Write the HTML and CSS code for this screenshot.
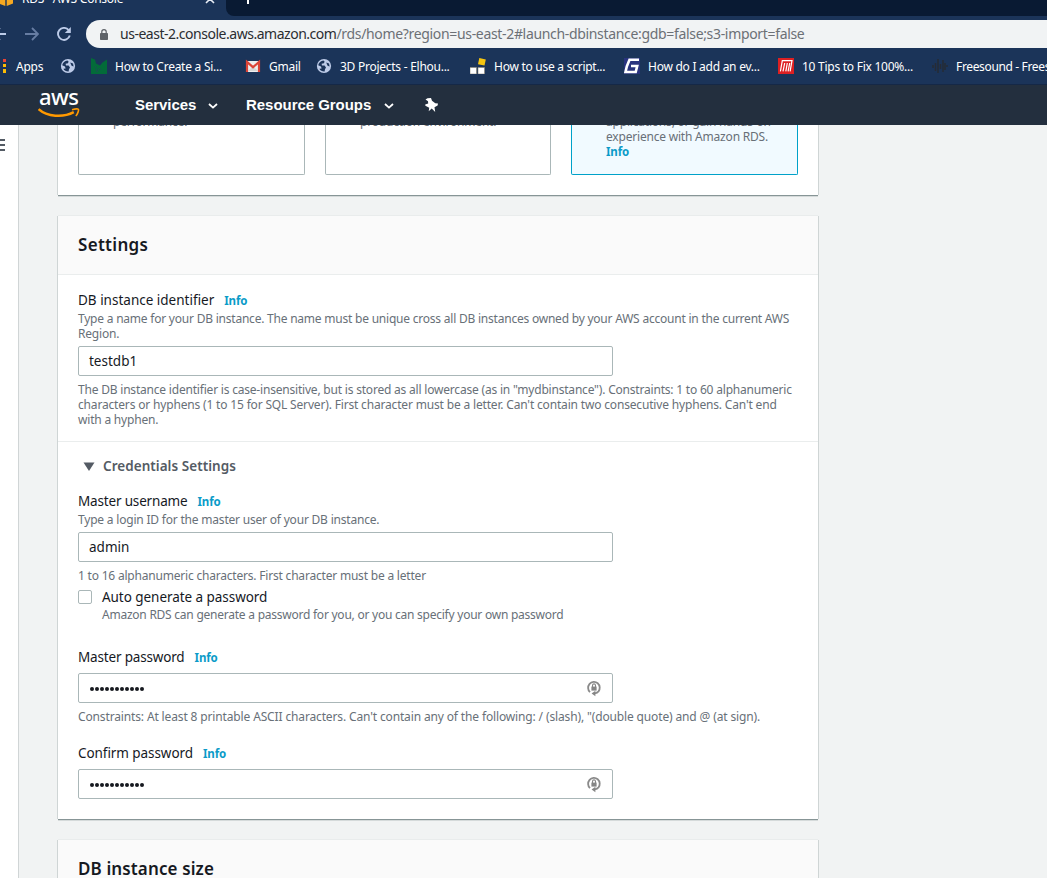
FILE: index.html
```
<!DOCTYPE html>
<html lang="en">
<head>
<meta charset="utf-8">
<title>RDS · AWS Console</title>
<link rel="stylesheet" href="styles.css">
</head>
<body>
<svg class="defs" width="0" height="0">
  <symbol id="globe" viewBox="0 0 16 16">
    <circle cx="8" cy="8" r="7.1" fill="#bdcbe8"/>
    <path d="M2.2 7.2C2.6 4.6 5 2.6 7.4 2.4L8.6 3.6 8 5.2 5.6 5.8 6 7.4 8.6 7.6 10 9.4 9 11.2 8.6 13.6C6.6 13.8 4.2 12.6 3.4 10.8L5.6 10.6 5 8.6Z" fill="#1b3459"/>
    <path d="M10.2 4.4L13 5.4 13.6 8.4 11.6 7.8Z" fill="#1b3459"/>
  </symbol>
  <symbol id="chev" viewBox="0 0 10 6"><path d="M1 1l4 3.6L9 1" fill="none" stroke="#fff" stroke-width="1.8"/></symbol>
  <symbol id="key" viewBox="0 0 16 18">
    <path d="M4 13.200A5.800 6 0 1 1 12.400 12.600Q11.400 14 8.800 14.300" fill="none" stroke="#8a8a8a" stroke-width="1.800"/>
    <path d="M9.400 11.800v5.400L5.600 14.600z" fill="#858585"/>
    <rect x="5.400" y="7.600" width="5.200" height="4" fill="#858585"/>
    <path d="M6.500 8V6.400a1.500 1.500 0 0 1 3 0V8" fill="none" stroke="#858585" stroke-width="1.100"/>
  </symbol>
</svg>

<div class="tabstrip">
  <div class="tab">
    <svg class="favicon" width="14" height="14" viewBox="0 0 14 14"><path d="M0 0h6.3v14L0 11.5zM7.7 0H14v11.5L7.7 14z" fill="#f6a821"/></svg>
    <span class="tab-title">RDS · AWS Console</span>
    <svg class="tab-close" width="10" height="10" viewBox="0 0 10 10"><path d="M1 1l8 8M9 1L1 9" stroke="#e8edf5" stroke-width="1.6"/></svg>
  </div>
  <div class="tab-rest"><i class="plus"></i></div>
</div>

<div class="toolbar">
  <svg class="back" width="14" height="14" viewBox="0 0 14 14"><path d="M13 7H1M7 1L1 7l6 6" fill="none" stroke="#bccbe8" stroke-width="1.8"/></svg>
  <svg class="fwd" width="14" height="14" viewBox="0 0 14 14"><path d="M0 7h13M7 1l6 6-6 6" fill="none" stroke="#677da3" stroke-width="1.8"/></svg>
  <svg class="reload" width="14" height="14" viewBox="0 0 14 14"><path d="M11.6 3A6 6 0 1 0 12.8 8.6" fill="none" stroke="#bccbe8" stroke-width="1.9"/><path d="M13.8 0v6H7.8z" fill="#bccbe8"/></svg>
  <div class="omnibox">
    <svg width="8" height="11" viewBox="0 0 8 11"><rect y="4" width="8" height="7" rx=".8" fill="#5f6368"/><path d="M1.8 4.5V2.8a2.2 2.2 0 0 1 4.4 0v1.7" fill="none" stroke="#5f6368" stroke-width="1.2"/></svg>
    <span class="url"><b>us-east-2.console.aws.amazon.com</b>/rds/home?region=us-east-2#launch-dbinstance:gdb=false;s3-import=false</span>
  </div>
</div>

<div class="bookmarks">
  <a class="bm apps"><svg width="16" height="16" viewBox="0 0 16 16"><path d="M4 1h4v4H4z" fill="#ea4335"/><path d="M11 1h3v3h-3z" fill="#ea4335"/><path d="M4 6h4v4H4z" fill="#4285f4"/><path d="M11 6h3v3h-3zM4 11h4v4H4zM11 11h3v4h-3z" fill="#fbbc05"/></svg><span>Apps</span></a>
  <a class="bm"><svg width="16" height="16"><use href="#globe"/></svg></a>
  <a class="bm"><svg width="16" height="16" viewBox="0 0 16 16"><path d="M0 0L4 1.5 5 5.5 9 7.5 11.5 4.5 16 1.5V16H0z" fill="#036b39"/><path d="M4.5 8l1.5 6 2.5-4 1.5 2" fill="none" stroke="#1b4f52" stroke-width=".9"/></svg><span>How to Create a Si...</span></a>
  <a class="bm gmail"><svg width="16" height="16" viewBox="0 0 16 16"><path d="M1 3h14v11H1z" fill="#eee"/><path d="M3 13l5-5 5 5z" fill="#d7d7d7"/><path d="M2 14V4L8 9.200 14 4V14" fill="none" stroke="#dc4437" stroke-width="2.2"/></svg><span>Gmail</span></a>
  <a class="bm"><svg width="16" height="16"><use href="#globe"/></svg><span>3D Projects - Elhou...</span></a>
  <a class="bm script"><svg width="16" height="16" viewBox="0 0 16 16"><path d="M9.300 0l6.500 1.400-1.300 6.200L8 6.200z" fill="#f6c510"/><path d="M0 9.500h6.500V16H0zM8 9.500h6.500V16H8z" fill="#fff" stroke="#8d8572" stroke-width=".6"/></svg><span>How to use a script...</span></a>
  <a class="bm"><svg width="16" height="16" viewBox="0 0 16 16"><rect width="16" height="16" fill="#29337e"/><path d="M15 1.800H5.500L2.800 8.500 1.500 14h10.200l1.500-6H7" fill="none" stroke="#fff" stroke-width="2.6"/></svg><span>How do I add an ev...</span></a>
  <a class="bm tips"><svg width="16" height="16" viewBox="0 0 16 16"><rect width="16" height="16" fill="#dd2022"/><path d="M2.400 13.400L4.300 2.600h9.700l-1.900 10.800M5 13.400L6.700 5M7.800 13.400L9.300 5M10.100 13.400L11.700 5" fill="none" stroke="#fff" stroke-width="1.2"/></svg><span>10 Tips to Fix 100%...</span></a>
  <a class="bm free"><svg width="16" height="16" viewBox="0 0 16 16"><path d="M1 7v3M3.500 5v8M6 1v14M8.500 6v5M11 2v12M13 5v7M15 7v2" stroke="#262b35" stroke-width="1.500"/></svg><span>Freesound - Freesound</span></a>
</div>

<nav class="awsnav">
  <div class="aws-logo">
    <span>aws</span>
    <svg width="42" height="14" viewBox="0 0 42 14"><path d="M.6 1.200C9 8.800 25 10 35.800 4.200" fill="none" stroke="#f90" stroke-width="2.500"/><path d="M34 1.800c3-1 6-1 6.400-.400.500 1-.8 4.800-2.600 6.600" fill="none" stroke="#f90" stroke-width="1.600"/></svg>
  </div>
  <span class="nav-item services">Services</span><svg class="c1" width="10" height="6"><use href="#chev"/></svg>
  <span class="nav-item groups">Resource Groups</span><svg class="c2" width="10" height="6"><use href="#chev"/></svg>
  <svg class="pin" width="13" height="14" viewBox="0 0 13 14"><path d="M2.500.3L6 0l1 2.800 3.300 2.400L13 5.600 12.600 7.600 9.500 9.300 10.200 14 6.700 10.600 3.700 13.200 4.200 9.800.4 7.800.2 6.500 3.200 5.600 3 3.200.5 1.600z" fill="#fff"/></svg>
</nav>

<div class="page">
  <aside class="side"><svg width="5" height="12" viewBox="0 0 5 12"><path d="M0 1h5M0 6h5M0 11h5" stroke="#545b64" stroke-width="1.800"/></svg></aside>
  <main class="main">
    <section class="card templates">
      <div class="tile"><p class="help h-perf">performance.</p></div>
      <div class="tile"><p class="help h-prod">production environment.</p></div>
      <div class="tile selected"><p class="help h-apps">applications, or gain hands-on</p><p class="help h-exp">experience with Amazon RDS.</p><p class="info">Info</p></div>
    </section>

    <section class="card settings">
      <header class="card-head"><h2>Settings</h2></header>
      <div class="group">
        <div class="label"><span class="l-ident">DB instance identifier</span><a class="info">Info</a></div>
        <p class="help h-1">Type a name for your DB instance. The name must be unique cross all DB instances owned by your AWS account in the current AWS</p>
        <p class="help">Region.</p>
        <div class="input">testdb1</div>
        <p class="help h-2 after">The DB instance identifier is case-insensitive, but is stored as all lowercase (as in "mydbinstance"). Constraints: 1 to 60 alphanumeric</p>
        <p class="help h-3">characters or hyphens (1 to 15 for SQL Server). First character must be a letter. Can't contain two consecutive hyphens. Can't end</p>
        <p class="help h-4">with a hyphen.</p>
      </div>
      <div class="group credentials">
        <div class="expander"><svg width="12" height="9" viewBox="0 0 12 9"><path d="M.5.500h11L6 9z" fill="#545b64"/></svg><h3>Credentials Settings</h3></div>
        <div class="label l-user-row"><span class="l-user">Master username</span><a class="info">Info</a></div>
        <p class="help h-5">Type a login ID for the master user of your DB instance.</p>
        <div class="input">admin</div>
        <p class="help h-6 after">1 to 16 alphanumeric characters. First character must be a letter</p>
        <div class="check-row"><i class="checkbox"></i><span class="l-auto">Auto generate a password</span></div>
        <p class="help h-7 indent">Amazon RDS can generate a password for you, or you can specify your own password</p>
        <div class="label l-pass-row"><span class="l-pass">Master password</span><a class="info">Info</a></div>
        <div class="input secret"><span class="dots"><i></i><i></i><i></i><i></i><i></i><i></i><i></i><i></i><i></i><i></i><i></i></span><svg width="16" height="18"><use href="#key"/></svg></div>
        <p class="help h-8 after">Constraints: At least 8 printable ASCII characters. Can't contain any of the following: / (slash), "(double quote) and @ (at sign).</p>
        <div class="label l-conf-row"><span class="l-conf">Confirm password</span><a class="info">Info</a></div>
        <div class="input secret"><span class="dots"><i></i><i></i><i></i><i></i><i></i><i></i><i></i><i></i><i></i><i></i><i></i></span><svg width="16" height="18"><use href="#key"/></svg></div>
      </div>
    </section>

    <section class="card size">
      <header class="card-head"><h2 class="h-size">DB instance size</h2></header>
    </section>
  </main>
</div>
</body>
</html>
```
FILE: styles.css
```
* { box-sizing: border-box; }
html, body { margin: 0; height: 878px; overflow: hidden; }
body { width: 1047px; display: flex; flex-direction: column; background: #f1f3f3; font-family: "Noto Sans", sans-serif; }
p, h2, h3 { margin: 0; }
svg { display: block; flex: none; }
.defs { position: absolute; }
span, p, h2, h3 { white-space: nowrap; }

/* browser chrome */
.tabstrip { display: flex; height: 16px; background: #1b3459; overflow: hidden; flex: none; }
.tab { width: 226px; display: flex; align-items: flex-start; }
.favicon { margin: -8px 0 0 -1px; }
.tab-title { margin: -9px 0 0 9px; font-size: 12px; line-height: 16px; letter-spacing: -0.25px; color: #fff; width: 183px; }
.tab-close { margin-top: -6px; }
.tab-rest { flex: 1; background: #091a33; border-bottom-left-radius: 8px; }
.plus { display: block; width: 2px; height: 4px; margin-left: 21px; background: #fff; }

.toolbar { display: flex; align-items: center; height: 36px; background: #1b3459; flex: none; }
.back { margin-left: -7px; }
.fwd { margin-left: 18px; }
.reload { margin-left: 18px; }
.omnibox { margin-left: 15px; flex: 1; height: 28px; display: flex; align-items: center; padding-left: 14px; background: #f1f3f4; border-radius: 14px 0 0 14px; }
.url { margin-left: 12px; font-size: 14px; line-height: 28px; letter-spacing: -0.33px; color: #6c7076; }
.url b { font-weight: 400; letter-spacing: -0.48px; color: #2a2d31; }

.bookmarks { display: grid; grid-template-columns: 60px 31px 154px 71px 154px 154px 154px 154px 115px; align-items: center; height: 33px; padding-bottom: 4px; background: #1b3459; border-bottom: 1px solid #152846; flex: none; overflow: hidden; }
.bm { display: flex; align-items: center; gap: 8px; font-size: 12px; letter-spacing: -0.26px; color: #fff; }
.bm.apps { margin-left: -8px; }
.bm.free { letter-spacing: -0.35px; }

/* console navigation */
.awsnav { display: flex; align-items: center; height: 40px; background: #232f3e; flex: none; }
.aws-logo { width: 42px; margin-left: 38px; height: 32px; }
.aws-logo span { display: block; font: 500 22px/18px "Noto Sans", sans-serif; height: 18px; letter-spacing: -0.6px; padding-left: 1px; color: #fff; margin-top: 1px; transform: translateY(-3px); }
.nav-item { font: 700 15px/20px "Liberation Sans", sans-serif; letter-spacing: -0.04px; color: #fff; }
.services { width: 61px; margin-left: 55px; }
.c1 { margin: 1px 0 0 12px; }
.groups { width: 126px; margin-left: 28px; }
.c2 { margin: 1px 0 0 12px; }
.pin { margin-left: 31px; }

/* page */
.page { display: flex; flex: 1; min-height: 0; overflow: hidden; }
.side { width: 19px; background: #fff; border-right: 1px solid #d0d5d6; padding-top: 14px; }
.main { padding-left: 39px; width: 800px; }
.card { width: 760px; background: #fff; box-shadow: 0 1px 0 #879596, 1px 0 0 #cfd5d5, -1px 0 0 #cfd5d5, 0 -1px 0 #e9ecec, 0 2px 0 #d5dada; }
.templates { display: grid; grid-template-columns: 227px 226px 227px; gap: 20px; height: 70px; padding: 0 20px 20px; }
.tile { height: 50px; border: 1px solid #aab7b8; border-top: 0; border-radius: 0 0 2px 2px; padding-left: 34px; overflow: hidden; }
.tile .help:first-child { margin-top: -11px; }
.tile.selected { border-color: #00a1c9; background: #f1faff; }
.tile .info { line-height: 15px; margin-left: 0; }
.settings { margin-top: 21px; height: 603px; }
.size { margin-top: 21px; }
.card-head { height: 59px; padding: 18px 20px 0; background: #fafafa; border-bottom: 1px solid #eaeded; }
h2 { font-size: 17px; font-weight: 600; line-height: 22px; letter-spacing: 0.3px; color: #16191f; }
.h-size { letter-spacing: 0.12px; }

.group { padding: 14px 20px 14px; }
.credentials { padding: 13px 20px 20px; border-top: 1px solid #eaeded; }
.label { display: flex; align-items: center; height: 22px; font-size: 13.5px; color: #16191f; }
.l-user, .l-pass { letter-spacing: -0.17px; }
.l-conf { letter-spacing: -0.07px; }
.l-auto { letter-spacing: -0.05px; }
.info { font-size: 11.5px; font-weight: 700; letter-spacing: -0.1px; color: #0a9bc8; margin-left: 10px; }
.label .info { padding-top: 1px; }
.help { font-size: 12px; line-height: 15px; letter-spacing: -0.2px; color: #687078; }
.h-1 { letter-spacing: -0.22px; }
.h-3 { letter-spacing: -0.17px; }
.h-7 { letter-spacing: -0.24px; }
.h-8 { letter-spacing: -0.14px; }
.input { width: 535px; height: 30px; margin-top: 5px; border: 1px solid #aab7b8; border-radius: 2px; padding-left: 10px; font-size: 13.5px; line-height: 28px; color: #16191f; }
.after { margin-top: 6px; }
.expander { display: flex; align-items: center; height: 22px; padding-left: 5px; gap: 8px; }
h3 { font-size: 13.5px; font-weight: 600; line-height: 22px; letter-spacing: 0.04px; color: #545b64; }
.l-user-row { margin-top: 13px; }
.check-row { display: flex; align-items: center; height: 21px; margin-top: 3px; gap: 10px; font-size: 13.5px; color: #16191f; }
.checkbox { width: 14px; height: 14px; margin-top: 1px; border: 1px solid #aab7b8; border-radius: 2px; }
.indent { margin-left: 24px; }
.l-pass-row { margin-top: 24px; }
.l-conf-row { margin-top: 18px; }
.secret { display: flex; align-items: center; justify-content: space-between; padding-right: 10px; }
.dots { display: flex; gap: 1px; padding: 2px 0 0 1px; }
.dots i { width: 4px; height: 4px; border-radius: 50%; background: #16191f; }
```
